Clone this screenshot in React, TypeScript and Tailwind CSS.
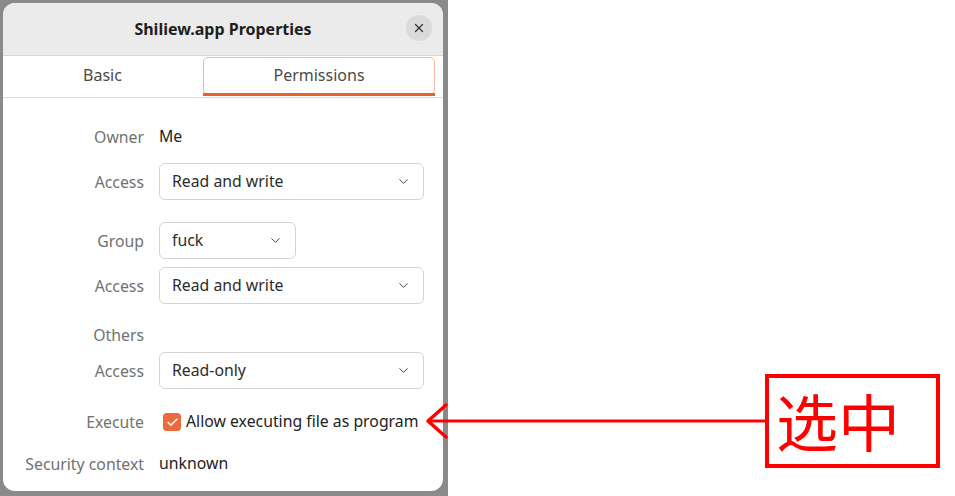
import { ChevronDown, X, Check } from 'lucide-react';

const font = { fontFamily: '"Noto Sans", "Open Sans", sans-serif' };

function Dropdown({ value, wide = true }: { value: string; wide?: boolean }) {
  return (
    <div
      className={`h-[37px] ${wide ? 'w-[265px]' : 'w-[137px]'} flex items-center justify-between pl-[12px] pr-[12px] border border-[#d3d3d3] rounded-[6px] bg-white text-[15.8px] text-[#2c2c2c]`}
    >
      <span>{value}</span>
      <ChevronDown className="w-[15px] h-[15px] text-[#444]" strokeWidth={1.6} />
    </div>
  );
}

function Row({ label, children, className = '' }: { label: string; children: React.ReactNode; className?: string }) {
  return (
    <div className={`flex items-center ${className}`}>
      <div className="w-[141px] text-right text-[15.8px] text-[#717171] leading-5">{label}</div>
      <div className="ml-[15px] flex items-center">{children}</div>
    </div>
  );
}

export default function App() {
  return (
    <div className="relative w-[955px] h-[496px] bg-white overflow-hidden" style={font}>
      <div className="w-[448px] h-[496px] bg-[#8a8a8a] pt-[3px] pl-[3px]">
        <div className="w-[440px] h-[488px] bg-white rounded-[12px] overflow-hidden flex flex-col">
          <header className="h-[53px] bg-[#ebebeb] border-b border-[#d6d6d6] flex items-center justify-center relative">
            <h1 className="text-[16px] font-bold text-[#1e1e1e]">Shiliew.app Properties</h1>
            <button className="absolute right-[11px] top-[12px] w-[26px] h-[26px] rounded-full bg-[#dadada] flex items-center justify-center">
              <X className="w-[14px] h-[14px] text-[#333]" strokeWidth={2.2} />
            </button>
          </header>

          <div className="h-[42px] flex border-b border-[#dcdcdc] pt-[1px]">
            <div className="w-[199px] flex items-center justify-center pb-[4px] text-[16px] text-[#4a4a4a]">Basic</div>
            <div className="relative w-[232px] h-[40px] ml-[1px]">
              <div className="h-[38px] border border-[#f3b9a3] rounded-[5px] flex items-center justify-center pb-[2px] text-[16px] text-[#4a4a4a]">
                Permissions
              </div>
              <div className="absolute left-0 right-0 bottom-[1px] h-[3px] bg-[#e95f2d]" />
            </div>
          </div>

          <div className="flex flex-col">
            <Row label="Owner" className="mt-[29px] h-[20px]">
              <span className="text-[15.8px] text-[#222]">Me</span>
            </Row>
            <Row label="Access" className="mt-[16px]">
              <Dropdown value="Read and write" />
            </Row>
            <Row label="Group" className="mt-[22px]">
              <Dropdown value="fuck" wide={false} />
            </Row>
            <Row label="Access" className="mt-[8px]">
              <Dropdown value="Read and write" />
            </Row>
            <Row label="Others" className="mt-[21px] h-[20px]">
              <span />
            </Row>
            <Row label="Access" className="mt-[7px]">
              <Dropdown value="Read-only" />
            </Row>
            <Row label="Execute" className="mt-[23px] h-[20px]">
              <div className="ml-[4px] w-[18px] h-[18px] rounded-[4px] bg-[#ec6a3c] flex items-center justify-center">
                <Check className="w-[13px] h-[13px] text-white" strokeWidth={3} />
              </div>
              <span className="ml-[5px] text-[15.8px] text-[#222]">Allow executing file as program</span>
            </Row>
            <Row label="Security context" className="mt-[22px] h-[20px]">
              <span className="text-[15.8px] text-[#222]">unknown</span>
            </Row>
          </div>
        </div>
      </div>

      <svg className="absolute left-[424px] top-[400px]" width="345" height="42" viewBox="0 0 345 42">
        <line x1="5" y1="21" x2="343" y2="21" stroke="#ff0000" strokeWidth="3" />
        <polyline points="22,5 4,21 22,37" fill="none" stroke="#ff0000" strokeWidth="3.5" strokeLinecap="round" strokeLinejoin="round" />
      </svg>

      <div
        className="absolute left-[765px] top-[374px] w-[175px] h-[94px] border-[4px] border-[#ff0000] bg-white flex items-center pl-[7px] pb-[2px] text-[62px] font-normal leading-none text-[#ff0000]"
        style={{ fontFamily: '"Noto Sans CJK SC", sans-serif' }}
      >
        选中
      </div>
    </div>
  );
}
